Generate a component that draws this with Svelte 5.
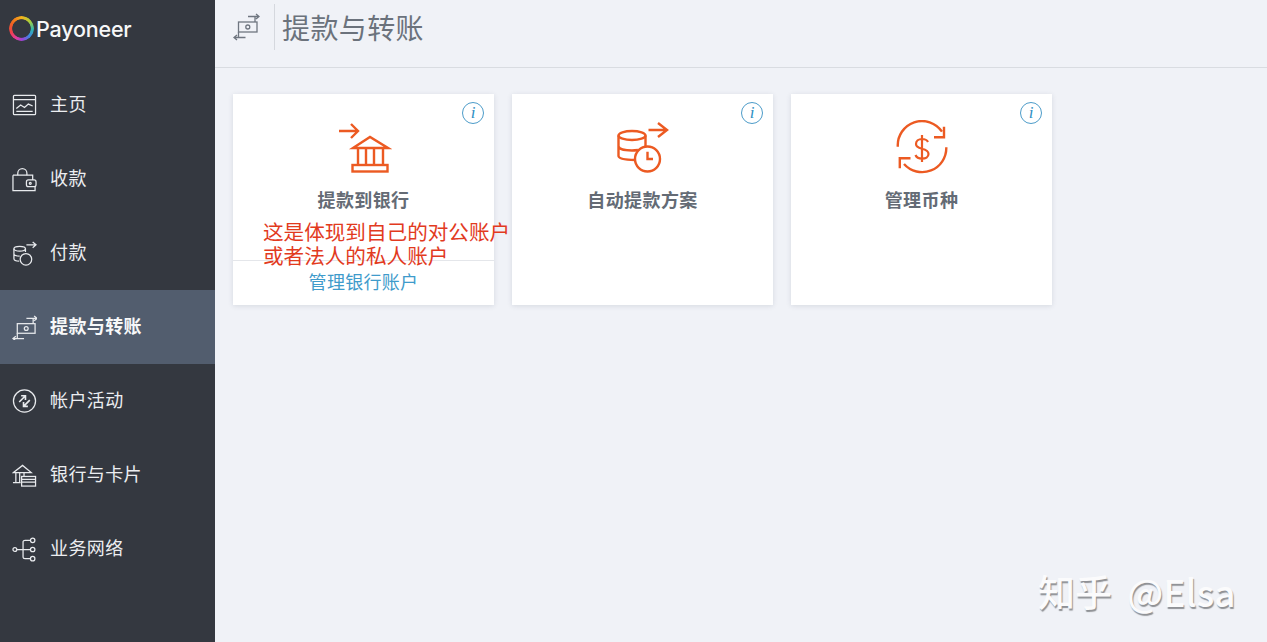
<script>
  const nav = [
    { label: '主页', icon: 'home' },
    { label: '收款', icon: 'receive' },
    { label: '付款', icon: 'pay' },
    { label: '提款与转账', icon: 'transfer', active: true },
    { label: '帐户活动', icon: 'activity' },
    { label: '银行与卡片', icon: 'bank' },
    { label: '业务网络', icon: 'network' }
  ];
</script>

{#snippet transferIcon()}
  <rect x="5.500" y="9" width="18.500" height="10" />
  <circle cx="14.800" cy="14" r="2" />
  <path d="M15 3.500H26M23 1L26 3.500L23 6M22 3.500V9" />
  <path d="M1 24.500H12.500M4 22L1 24.500L4 27M5.500 19V24.500" />
{/snippet}

{#snippet navIcon(name)}
  <svg class="nav-icon" viewBox="0 0 26 26" aria-hidden="true">
    {#if name === 'home'}
      <rect x="1.500" y="2.500" width="23" height="20" rx="1" />
      <path d="M1.500 7H24.500M4.500 19H21.500M4.500 16L9 12.500L13 15L17 11.500L21.500 13.500" />
    {:else if name === 'receive'}
      <path d="M1 8.500H21.500V13.500M24 20.500V24.500H1V8.500" />
      <path d="M6 8.500V6.500A4.700 4.700 0 0 1 15.500 6.500V8.500" />
      <rect x="15" y="13.500" width="10" height="7" rx="2" />
      <circle cx="19" cy="17" r="1" />
    {:else if name === 'pay'}
      <ellipse cx="8" cy="8" rx="6" ry="2.500" />
      <path d="M2 8V18.500C2 20 4 21 7.500 21M14 8V11.500M2 13.200C2 14.800 4.500 15.700 8 15.700M15 4H25M21.500 1L25 4L21.500 7" />
      <circle cx="14.500" cy="19" r="6" />
    {:else if name === 'transfer'}
      {@render transferIcon()}
    {:else if name === 'activity'}
      <circle cx="13" cy="12.500" r="11.500" />
      <path class="thick" d="M7.500 13.500L14 7M9.500 7H14V11.500M18.500 11.500L12 18M16.500 18H12V13.500" />
    {:else if name === 'bank'}
      <path d="M1.500 10L11 2.500L20 10H1.500ZM4 10V20M8 10V20M12.500 10V14M1 20.500H9" />
      <rect x="10" y="14" width="14.500" height="10" />
      <path d="M10 17H24.500M10 20H24.500" />
    {:else}
      <circle cx="3" cy="13" r="2" />
      <circle cx="21.500" cy="3.500" r="2.300" />
      <circle cx="21.500" cy="13" r="2.300" />
      <circle cx="21.500" cy="22.500" r="2.300" />
      <path d="M5 13H19M11.500 13V5C11.500 4 12.500 3.500 13.500 3.500H19M11.500 13V21C11.500 22 12.500 22.500 13.500 22.500H19" />
    {/if}
  </svg>
{/snippet}

{#snippet infoIcon()}
  <span class="info" aria-hidden="true">i</span>
{/snippet}

<div class="page">
  <aside class="sidebar">
    <div class="brand">
      <span class="ring"></span>
      <span class="wordmark">Payoneer</span>
    </div>
    <nav>
      {#each nav as item}
        <div class="nav-item" class:active={item.active}>
          {@render navIcon(item.icon)}
          <span class="nav-label">{item.label}</span>
        </div>
      {/each}
    </nav>
  </aside>

  <main>
    <header>
      <svg class="head-icon" viewBox="0 0 27 28" aria-hidden="true">{@render transferIcon()}</svg>
      <h1>提款与转账</h1>
    </header>

    <section class="cards">
      <article class="card">
        {@render infoIcon()}
        <svg class="card-icon" viewBox="0 0 56 56" aria-hidden="true">
          <path d="M3 11H22M15 4L22 11L15 18" />
          <path d="M17 28L34 17L52 28H17ZM22 28V45M30 28V45M38 28V45M47 28V45" />
          <rect x="16.500" y="45" width="35" height="6.500" />
        </svg>
        <h2>提款到银行</h2>
        <a class="manage" href="#bank">管理银行账户</a>
        <p class="note">这是体现到自己的对公账户<br />或者法人的私人账户</p>
      </article>

      <article class="card">
        {@render infoIcon()}
        <svg class="card-icon" viewBox="0 0 56 56" aria-hidden="true">
          <ellipse cx="17" cy="15.500" rx="13.500" ry="4.500" />
          <path d="M3.500 15.500V36C3.500 38.500 9 39.700 20 40M30.500 15.500V26M3.500 26C3.500 29 10 30.500 17 30.500C19 30.500 21 30.300 23 30M33.500 10H52M43 3L52 10L43 17" />
          <circle cx="32.500" cy="39" r="12.500" />
          <path d="M32.500 31.700V39H38" />
        </svg>
        <h2>自动提款方案</h2>
      </article>

      <article class="card">
        {@render infoIcon()}
        <svg class="card-icon" viewBox="0 0 56 56" aria-hidden="true">
          <path d="M3.800 26.700A24.200 24.200 0 0 1 48 11.700M52.300 27.300A24.200 24.200 0 0 1 10 44" />
          <path d="M50 6.700V17.300H40M5.800 48.300V38.300H16.500" />
          <path class="dollar" d="M34 22C33 20 31 19 28 19C24.500 19 22 21 22 24C22 27 25 28 28 28.700C31 29.400 34.500 30.500 34.500 34C34.500 37 31.500 38.700 28 38.700C25 38.700 22.500 37.500 21.500 35M28 15V42" />
        </svg>
        <h2>管理币种</h2>
      </article>
    </section>

    <div class="watermark">知乎 @Elsa</div>
  </main>
</div>

<style>
  :global(body) {
    margin: 0;
    font-family: "Noto Sans CJK SC", "Noto Sans", sans-serif;
  }

  .page {
    display: flex;
    width: 1267px;
    height: 642px;
    overflow: hidden;
    background: #f0f2f7;
  }

  .sidebar {
    flex: 0 0 215px;
    background: #343840;
    color: #eceef1;
  }

  .brand {
    display: flex;
    align-items: center;
    gap: 2px;
    height: 68px;
    padding: 0 0 11px 9px;
    box-sizing: border-box;
  }

  .ring {
    width: 25px;
    height: 25px;
    border-radius: 50%;
    background: conic-gradient(#f5b21a 0deg, #a9cf3c 50deg, #2fb6b0 95deg, #3d86e0 135deg, #9a45d8 175deg, #e23c9a 210deg, #ef3f4c 250deg, #f0641f 300deg, #f5b21a 360deg);
    -webkit-mask: radial-gradient(circle, transparent 8.900px, #000 9.600px);
    mask: radial-gradient(circle, transparent 8.900px, #000 9.600px);
  }

  .wordmark {
    font-family: Inter, sans-serif;
    font-size: 21.500px;
    font-weight: 500;
    letter-spacing: -0.2px;
    color: #f6f7f8;
  }

  .nav-item {
    display: flex;
    align-items: center;
    gap: 13px;
    height: 74px;
    padding-left: 12px;
    box-sizing: border-box;
    font-size: 18px;
    letter-spacing: 0.4px;
  }

  .nav-label {
    padding-bottom: 4px;
  }

  .nav-item.active {
    background: #525d6e;
    font-weight: 700;
    color: #f7f8f9;
  }

  .nav-icon {
    flex: none;
    width: 25px;
    height: 25px;
    fill: none;
    stroke: #e8eaed;
    stroke-width: 1.300;
  }

  .nav-icon .thick {
    stroke-width: 1.700;
  }

  main {
    position: relative;
    flex: 1;
    min-width: 0;
  }

  header {
    display: flex;
    align-items: center;
    height: 68px;
    padding: 0 0 13px 18px;
    box-sizing: border-box;
    border-bottom: 1px solid #d9dce1;
  }

  .head-icon {
    width: 27px;
    height: 28px;
    fill: none;
    stroke: #6f7680;
    stroke-width: 1.300;
  }

  h1 {
    margin: 0 0 0 14px;
    padding-left: 7px;
    border-left: 1px solid #d5d8de;
    font-size: 28px;
    line-height: 46px;
    font-weight: 400;
    letter-spacing: 0.4px;
    color: #6b727c;
  }

  .cards {
    display: flex;
    gap: 18px;
    padding: 26px 18px;
  }

  .card {
    position: relative;
    display: flex;
    flex-direction: column;
    align-items: center;
    width: 261px;
    height: 211px;
    padding-top: 26px;
    box-sizing: border-box;
    background: #fff;
    box-shadow: 0 1px 5px rgba(60, 70, 90, 0.14);
  }

  .info {
    position: absolute;
    top: 8px;
    right: 10px;
    width: 20px;
    height: 20px;
    border: 1px solid #4d9cc9;
    border-radius: 50%;
    font: italic 400 17px/20px "Liberation Serif", serif;
    text-align: center;
    color: #2f8fc4;
  }

  .card-icon {
    width: 56px;
    height: 56px;
    fill: none;
    stroke: #ec5a22;
    stroke-width: 2.400;
  }

  .card-icon .dollar {
    stroke-width: 2.200;
  }

  h2 {
    margin: 10px 0 0;
    font-size: 18px;
    line-height: 26px;
    font-weight: 700;
    letter-spacing: 0.4px;
    color: #646b75;
  }

  .manage {
    position: absolute;
    left: 0;
    right: 0;
    bottom: 0;
    height: 45px;
    border-top: 1px solid #e4e6ea;
    box-sizing: border-box;
    font-size: 18px;
    line-height: 40px;
    letter-spacing: 0.3px;
    text-align: center;
    text-decoration: none;
    color: #3f9bcb;
  }

  .note {
    position: absolute;
    top: 125px;
    left: 30px;
    margin: 0;
    font-size: 20.600px;
    line-height: 24px;
    white-space: nowrap;
    color: #e23a1e;
  }

  .watermark {
    position: absolute;
    left: 823px;
    top: 566px;
    font-size: 37px;
    line-height: 50px;
    font-weight: 500;
    word-spacing: 7px;
    color: #fbfbfc;
    white-space: nowrap;
    text-shadow: 1px 2px 1px #8f9195;
  }
</style>
